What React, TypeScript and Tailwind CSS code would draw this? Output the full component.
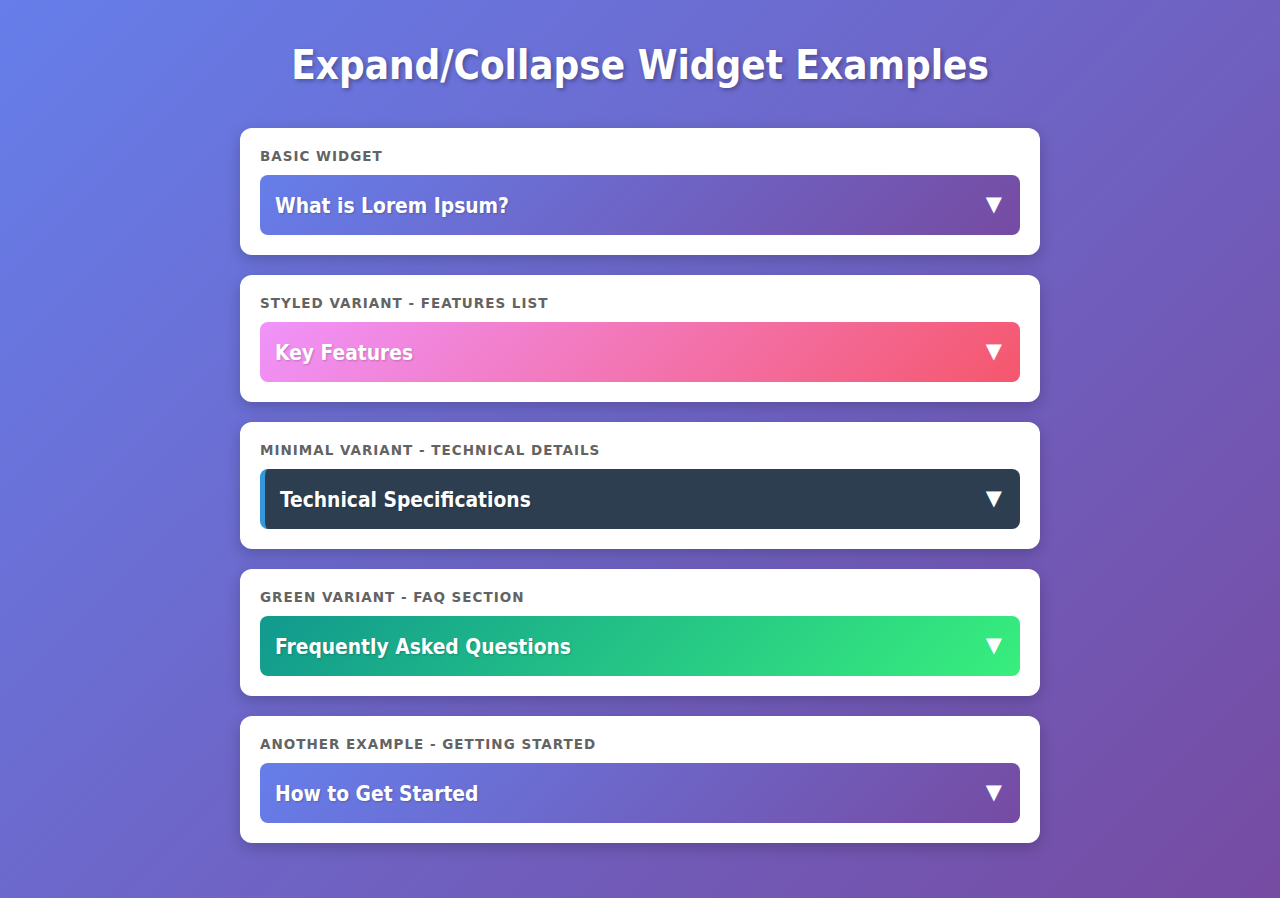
import React, { useState } from 'react';

type Variant = 'basic' | 'styled' | 'minimal' | 'green';

const headerStyles: Record<Variant, string> = {
  basic: 'bg-[linear-gradient(135deg,#667eea_0%,#764ba2_100%)]',
  styled: 'bg-[linear-gradient(135deg,#f093fb_0%,#f5576c_100%)]',
  minimal: 'bg-[#2c3e50] border-l-[5px] border-[#3498db] pl-[15px]',
  green: 'bg-[linear-gradient(135deg,#11998e_0%,#38ef7d_100%)]',
};

const widgets: { label: string; title: string; variant: Variant; body: string }[] = [
  { label: 'Basic Widget', title: 'What is Lorem Ipsum?', variant: 'basic', body: 'Lorem Ipsum is simply dummy text of the printing and typesetting industry.' },
  { label: 'Styled Variant - Features List', title: 'Key Features', variant: 'styled', body: 'Smooth animations, custom styling and accessible markup.' },
  { label: 'Minimal Variant - Technical Details', title: 'Technical Specifications', variant: 'minimal', body: 'Built with plain HTML, CSS and a few lines of script.' },
  { label: 'Green Variant - FAQ Section', title: 'Frequently Asked Questions', variant: 'green', body: 'Click any header to reveal its content.' },
  { label: 'Another Example - Getting Started', title: 'How to Get Started', variant: 'basic', body: 'Copy the markup, include the styles and you are ready.' },
];

const Widget = ({ label, title, variant, body }: (typeof widgets)[number]) => {
  const [open, setOpen] = useState(false);
  return (
    <div className="bg-white rounded-xl p-5 shadow-[0_5px_15px_rgba(0,0,0,0.2)]">
      <div className="font-['DejaVu_Sans',sans-serif] text-[13.5px] leading-[17px] font-bold uppercase tracking-[1px] text-[#636363] mb-[10px]">
        {label}
      </div>
      <button
        onClick={() => setOpen(!open)}
        className={`w-full h-[60px] flex items-center justify-between rounded-lg px-[15px] text-white text-left cursor-pointer ${headerStyles[variant]}`}
      >
        <span className="pt-[4px] text-[20.8px] font-bold [text-shadow:1px_1px_2px_rgba(0,0,0,0.2)]">{title}</span>
        <span className={`mr-[3px] font-['DejaVu_Sans',sans-serif] text-[21px] transition-transform ${open ? 'rotate-180' : ''}`}>▼</span>
      </button>
      {open && <div className="px-[15px] pt-3 text-[15px] text-[#444]">{body}</div>}
    </div>
  );
};

export default function App() {
  return (
    <div className="min-h-[898px] px-5 pt-[21px] pb-10 font-['DejaVu_Sans_Condensed','DejaVu_Sans',sans-serif] bg-[linear-gradient(135deg,#667eea_0%,#764ba2_100%)]">
      <h1 className="text-center text-white text-[40px] leading-[48px] font-bold my-[20px] [text-shadow:2px_2px_4px_rgba(0,0,0,0.3)]">
        Expand/Collapse Widget Examples
      </h1>
      <div className="max-w-[800px] mx-auto flex flex-col gap-5 mt-[39px]">
        {widgets.map((w) => (
          <Widget key={w.title} {...w} />
        ))}
      </div>
    </div>
  );
}
